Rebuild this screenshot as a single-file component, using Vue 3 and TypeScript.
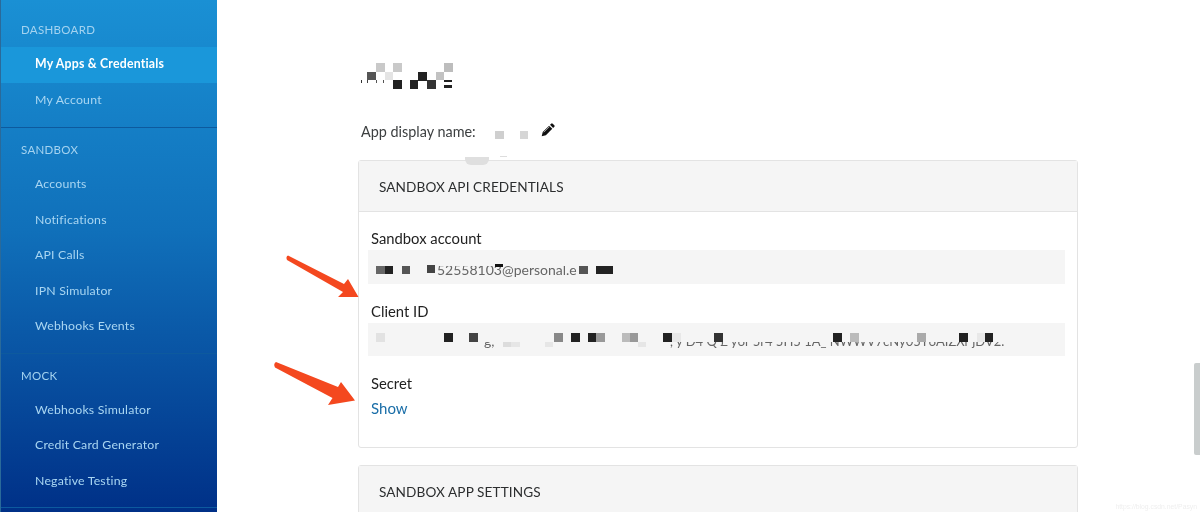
<script setup lang="ts">
interface NavGroup { title: string; items: string[] }
const groups: NavGroup[] = [
  { title: 'DASHBOARD', items: ['My Apps & Credentials', 'My Account'] },
  { title: 'SANDBOX', items: ['Accounts', 'Notifications', 'API Calls', 'IPN Simulator', 'Webhooks Events'] },
  { title: 'MOCK', items: ['Webhooks Simulator', 'Credit Card Generator', 'Negative Testing'] },
]
// [left, top, width, height, colour] of each pixelated patch, in page coordinates
const patches: [number, number, number, number, string][] = [
  [376, 63, 9, 9, '#c9c9c9'], [393, 63, 9, 9, '#c9c9c9'], [444, 63, 9, 9, '#bdbdbd'],
  [367, 72, 9, 8, '#555'], [385, 72, 8, 8, '#e4e4e4'], [418, 72, 9, 9, '#222'], [436, 72, 8, 8, '#c2c2c2'],
  [393, 80, 9, 9, '#222'], [410, 80, 8, 9, '#222'], [427, 80, 9, 9, '#333'], [444, 80, 8, 2, '#222'], [444, 85, 8, 3, '#222'],
  [361, 80, 1, 3, '#333'], [367, 80, 1, 3, '#444'], [376, 80, 1, 3, '#555'], [383, 80, 1, 3, '#555'],
  [495, 131, 9, 8, '#cfcfcf'], [520, 131, 8, 8, '#d6d6d6'],
  [500, 156, 7, 1, '#ddd'],
  [376, 266, 9, 8, '#666'], [385, 266, 8, 8, '#222'], [402, 266, 8, 8, '#555'], [427, 265, 8, 8, '#444'],
  [495, 264, 8, 3, '#111'], [579, 266, 9, 8, '#555'], [596, 266, 9, 8, '#222'], [605, 266, 8, 8, '#222'],
  [376, 333, 9, 9, '#e2e2e2'], [444, 333, 9, 9, '#222'], [469, 333, 9, 9, '#444'], [554, 333, 9, 9, '#888'],
  [571, 333, 9, 9, '#222'], [588, 333, 8, 9, '#222'], [596, 333, 9, 9, '#999'], [622, 333, 8, 9, '#bbb'],
  [630, 333, 8, 9, '#999'], [663, 333, 9, 9, '#222'], [672, 333, 9, 9, '#e8e8e8'], [714, 333, 9, 9, '#333'],
  [833, 333, 9, 9, '#222'], [850, 333, 9, 9, '#bbb'], [917, 333, 9, 9, '#aaa'], [959, 333, 9, 9, '#222'],
  [977, 333, 8, 9, '#e8e8e8'], [985, 333, 8, 9, '#222'],
  [503, 342, 8, 5, '#dcdcdc'], [511, 342, 9, 5, '#e6e6e6'], [545, 342, 8, 5, '#e6e6e6'], [638, 342, 8, 5, '#e6e6e6'],
]
const patchStyle = (p: [number, number, number, number, string]) => ({
  left: `${p[0]}px`, top: `${p[1]}px`, width: `${p[2]}px`, height: `${p[3]}px`, background: p[4],
})
</script>

<template>
  <div class="page">
    <aside class="sidebar">
      <section v-for="g in groups" :key="g.title" class="group">
        <h3 class="group-title">{{ g.title }}</h3>
        <a
          v-for="item in g.items"
          :key="item"
          class="nav-item"
          :class="{ active: item === 'My Apps & Credentials' }"
        >{{ item }}</a>
      </section>
    </aside>

    <main class="main">
      <div class="column">
        <div class="name-row">
          <span>App display name:</span>
          <svg class="pencil" viewBox="0 0 16 16" width="14" height="14">
            <path d="M.8 15.2 2 10.4 9.3 3.1l3.6 3.6-7.3 7.3Z" fill="#111" />
            <path d="M3.2 10.6 9.6 4.2" stroke="#fff" stroke-width=".7" fill="none" />
            <path d="M10.3 2.1 11.6.8q.9-.9 1.8 0l1.8 1.8q.9.9 0 1.8l-1.3 1.3Z" fill="#111" />
          </svg>
        </div>

        <div class="card">
          <div class="card-head">SANDBOX API CREDENTIALS</div>
          <div class="card-body">
            <div class="label">Sandbox account</div>
            <div class="field field-account"><span class="clip-account">52558103@personal.e</span></div>
            <div class="label gap">Client ID</div>
            <div class="field field-client">
              <span class="clip-g">g,</span>
              <span class="clip-id">, y D4 Q £ y6r 5r4 5H5 1A_ NWWV7cNy05T6AIZXr jDV2.</span>
            </div>
            <div class="label gap">Secret</div>
            <a class="show">Show</a>
          </div>
        </div>

        <div class="card second">
          <div class="card-head">SANDBOX APP SETTINGS</div>
        </div>
      </div>
    </main>

    <div class="overlay">
      <i v-for="(p, i) in patches" :key="i" class="patch" :style="patchStyle(p)"></i>
      <i class="tab"></i>
      <svg class="arrows" width="1200" height="512" viewBox="0 0 1200 512">
        <path d="M287 260 Q285.5 256.5 288 255.5 L344 284 L348 279 L358.5 297 L338 297 L343 292 Z" fill="#f4481f" />
        <path d="M275 367.5 Q273 364 276 362 L338 387 L341 382 L355 400.5 L328 405 L332.5 398 Z" fill="#f4481f" />
      </svg>
      <i class="scrollbar"></i>
      <span class="watermark">https://blog.csdn.net/Pasyn</span>
    </div>
  </div>
</template>

<style>
html, body { margin: 0; background: #fff; }
</style>

<style scoped>
.page {
  position: relative;
  display: flex;
  width: 1200px;
  height: 512px;
  overflow: hidden;
  background: #fff;
  font-family: "Lato", "Open Sans", sans-serif;
  color: #2c2e2f;
  filter: blur(0.35px);
}
.sidebar {
  flex: 0 0 217px;
  box-sizing: border-box;
  height: 512px;
  padding-top: 13px;
  border-left: 1px solid #2a6a9a;
  background: linear-gradient(180deg, #1a90d4 0%, #1070ba 45%, #003087 100%);
}
.group {
  padding: 5px 0 8px;
  border-bottom: 1px solid #0d5a9e;
}
.group:first-child { padding-top: 0; padding-bottom: 9px; }
.group-title {
  margin: 0;
  height: 34px;
  padding-left: 20px;
  font-size: 11.5px;
  font-weight: 400;
  line-height: 34px;
  letter-spacing: 0.3px;
  color: #a4d3f0;
}
.nav-item {
  display: block;
  height: 35.5px;
  padding-left: 34px;
  font-size: 12.3px;
  line-height: 34px;
  letter-spacing: 0.2px;
  color: #a9d6f2;
}
.nav-item.active {
  background: #1a97da;
  font-weight: 700;
  color: #fff;
}
.main { flex: 1; padding: 119px 0 0 141px; min-width: 0; }
.column { width: 720px; }
.name-row {
  display: flex;
  align-items: center;
  height: 24px;
  margin-bottom: 17px;
  padding-left: 3px;
  font-size: 14.4px;
  color: #3c3f40;
}
.pencil { margin-left: 65px; margin-top: -2px; }
.card {
  box-sizing: border-box;
  border: 1px solid #e3e3e3;
  border-radius: 3px;
}
.card-head {
  height: 50px;
  padding-left: 20px;
  border-bottom: 1px solid #e3e3e3;
  background: #f5f5f5;
  font-size: 13.6px;
  line-height: 52px;
  letter-spacing: 0.1px;
  color: #2c2e2f;
}
.card-body { padding: 14px 12px 27px 9px; }
.label {
  height: 24px;
  padding-left: 3px;
  font-size: 14.8px;
  line-height: 24px;
  color: #222;
}
.gap { margin-top: 15px; }
.field {
  position: relative;
  height: 34px;
  background: #f5f5f5;
  overflow: hidden;
  font-size: 14px;
  color: #666;
}
.field-client { height: 33px; }
.clip-account {
  position: absolute;
  left: 69px;
  top: 10px;
  line-height: 20px;
  clip-path: inset(6px 0 0 0);
}
.clip-g {
  position: absolute;
  left: 116px;
  top: 8px;
  line-height: 20px;
  clip-path: inset(11px 0 0 0);
}
.clip-id {
  position: absolute;
  left: 302px;
  top: 8px;
  font-size: 13px;
  line-height: 20px;
  white-space: nowrap;
  clip-path: inset(11px 0 0 0);
}
.show {
  display: block;
  height: 24px;
  margin-top: 1px;
  padding-left: 3px;
  font-size: 15px;
  line-height: 24px;
  color: #1a6ea8;
}
.second { margin-top: 17px; height: 80px; }
.overlay { position: absolute; inset: 0; pointer-events: none; }
.patch { position: absolute; display: block; }
.tab {
  position: absolute;
  left: 465px;
  top: 157px;
  width: 24px;
  height: 8px;
  background: #dfdfdf;
  border-radius: 0 0 6px 6px;
}
.arrows { position: absolute; left: 0; top: 0; }
.scrollbar {
  position: absolute;
  left: 1194px;
  top: 363px;
  width: 6px;
  height: 92px;
  background: #c9cdcd;
  border-radius: 2px 0 0 2px;
}
.watermark {
  position: absolute;
  right: 3px;
  bottom: 2px;
  font-size: 6.8px;
  color: #efefef;
  font-family: "Liberation Sans", sans-serif;
}
</style>
